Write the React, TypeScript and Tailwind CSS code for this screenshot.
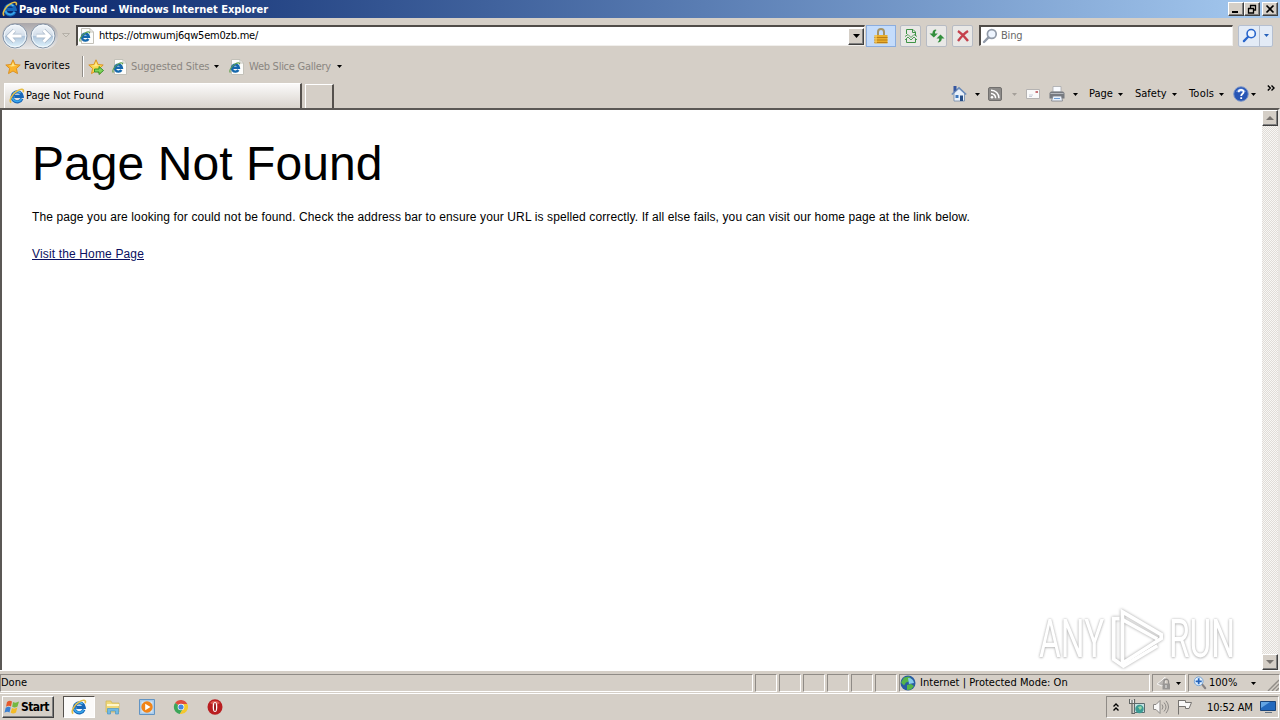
import React from 'react';

const EIcon: React.FC<{ className?: string }> = ({ className }) => (
  <svg viewBox="0 0 16 16" className={className}>
    <path d="M12.9 10.6A5 5 0 1 1 13.2 8.3H5.2" fill="none" stroke="#1767b8" strokeWidth="3.2" />
    <path d="M12.6 10.8A5 5 0 0 1 3.4 9.8" fill="none" stroke="#38a6ea" strokeWidth="1.6" />
    <path d="M4.4 5.6A4.8 4.8 0 0 1 11.5 5" fill="none" stroke="#5cc0f2" strokeWidth="1.3" />
    <path d="M2.2 14.6C-.6 12.6 3.6 5.4 8.6 2.6 12 .6 15.4.4 14.2 4.2" fill="none" stroke="#e5bd45" strokeWidth="1.6" />
  </svg>
);

const PageIcon = () => (
  <svg viewBox="0 0 16 16" className="h-4 w-4 shrink-0">
    <path d="M2.5.5h8.500l3.500 3.500v11.500h-12z" fill="#fdfdfb" stroke="#c3c1b9" />
    <path d="M11 .5V4h3.500" fill="none" stroke="#c3c1b9" />
    <path d="M9.400 11A3.500 3.500 0 1 1 9.900 8.800H3.400" fill="none" stroke="#1668ad" strokeWidth="2.400" />
    <path d="M1.400 13.500C-.4 11.900 2.600 7.100 6 5.100 8.600 3.500 11 3.300 10.500 5.300" fill="none" stroke="#5fa04c" strokeWidth="1.100" />
  </svg>
);

const Star: React.FC<{ add?: boolean }> = ({ add }) => (
  <svg viewBox="0 0 16 16" className="h-4 w-4 shrink-0">
    <path d="M8 .8l2.100 4.700 5.100.5-3.800 3.500 1.100 5.100L8 12l-4.500 2.600 1.100-5.100L.8 6l5.100-.5z" fill={add ? '#f8d94e' : '#fbb42c'} stroke="#d98c1c" strokeWidth=".9" />
    <path d="M8 3l1.200 3.300 3 .4-5.600.8-2.900-.8 3-.4z" fill="#ffe78a" />
    {add && <path d="M6.500 10H11V7.500l4.500 4-4.500 4V13H6.500z" fill="#7fd45a" stroke="#2d8a24" strokeWidth=".9" />}
  </svg>
);

const Caret: React.FC<{ className?: string }> = ({ className = 'text-black' }) => (
  <svg viewBox="0 0 5 3" className={`h-[3px] w-[5px] shrink-0 ${className}`}>
    <path d="M0 0h5L2.500 3z" fill="currentColor" />
  </svg>
);

const NavArrow: React.FC<{ flip?: boolean }> = ({ flip }) => (
  <svg viewBox="0 0 26 26" className={`h-[26px] w-[26px] shrink-0 ${flip ? '-scale-x-100' : ''}`}>
    <defs>
      <linearGradient id="orb" x1="0" y1="0" x2="0" y2="1">
        <stop offset="0" stopColor="#f2f6fa" />
        <stop offset=".48" stopColor="#d3deea" />
        <stop offset=".52" stopColor="#b0c6dc" />
        <stop offset="1" stopColor="#e2f6ff" />
      </linearGradient>
    </defs>
    <circle cx="13" cy="13" r="12" fill="url(#orb)" stroke="#8796a8" />
    <circle cx="13" cy="13" r="10.800" fill="none" stroke="#f4f9fd" />
    <path d="M12.500 7.300L6.800 13l5.700 5.700M7.500 13h12" fill="none" stroke="#a9b8c9" strokeWidth="4.400" />
    <path d="M12.500 7.300L6.800 13l5.700 5.700M7.500 13h12" fill="none" stroke="#fff" strokeWidth="3" />
  </svg>
);

const Magnifier: React.FC<{ color: string; className?: string }> = ({ color, className }) => (
  <svg viewBox="0 0 16 16" className={className}>
    <circle cx="9.800" cy="6" r="4.400" fill="#eef5ff" stroke={color} strokeWidth="1.700" />
    <path d="M6.500 9.400L2 14" stroke={color} strokeWidth="2.400" strokeLinecap="round" />
  </svg>
);

const ToolButton: React.FC<{ children: React.ReactNode }> = ({ children }) => (
  <div className="flex h-[22px] w-[21px] shrink-0 items-center justify-center rounded-[2px] border border-[#b7bbc3] bg-[#e9e8e6]">
    {children}
  </div>
);

const raised = 'border border-t-white border-l-white border-r-[#404040] border-b-[#404040] bg-[#d5cfc7] shadow-[inset_-1px_-1px_#808080]';

const WindowButton: React.FC<{ children: React.ReactNode }> = ({ children }) => (
  <div className={`flex h-[14px] w-4 shrink-0 items-center justify-center ${raised}`}>
    <svg viewBox="0 0 12 10" className="h-[10px] w-3 shrink-0" fill="none" stroke="#000">
      {children}
    </svg>
  </div>
);

const ScrollButton: React.FC<{ up?: boolean }> = ({ up }) => (
  <div className={`flex h-4 w-4 shrink-0 items-center justify-center ${raised}`}>
    <svg viewBox="0 0 8 4" className={`h-1 w-2 ${up ? '' : 'rotate-180'}`}>
      <path d="M0 4L4 0l4 4z" fill="#77736f" />
    </svg>
  </div>
);

const TitleBar = () => (
  <div className="flex h-[18px] items-center bg-linear-to-r from-[#0a246a] to-[#a6caf0] pl-[2px] pr-[2px]">
    <EIcon className="h-4 w-4 shrink-0" />
    <span className="ml-px pt-px text-[11px] font-bold text-white">Page Not Found - Windows Internet Explorer</span>
    <div className="ml-auto flex">
      <WindowButton><path d="M2 8h6" strokeWidth="2" /></WindowButton>
      <WindowButton><path d="M4 1.500h6M4.500 1v3M9.500 1v5H8M2 4.500h6M2.500 4v5h5V4" strokeWidth="1.300" /></WindowButton>
      <div className="ml-[2px]">
        <WindowButton><path d="M2.500 1.500l7 7M9.500 1.500l-7 7" strokeWidth="1.700" /></WindowButton>
      </div>
    </div>
  </div>
);

const NavBar = () => (
  <div className="flex h-[35px] items-center pl-[2px]">
    <div className="flex w-14 shrink-0 gap-[2px] rounded-full bg-linear-to-b from-[#aaa7aa] to-[#e9e8e8]">
      <NavArrow />
      <NavArrow flip />
    </div>
    <svg viewBox="0 0 8 5" className="ml-[4px] h-[5px] w-2 shrink-0"><path d="M.5.5h7L4 4z" fill="#d8d4cc" stroke="#b5b0a8" /></svg>
    <div className="ml-[6px] flex h-[21px] w-[789px] shrink-0 items-center border-2 border-b border-r border-t-[#504c48] border-l-[#504c48] border-b-[#f1efec] border-r-[#f1efec] bg-white pl-px">
      <PageIcon />
      <span className="ml-[4px] text-[11px] tracking-[-0.19px] text-black">https://otmwumj6qw5em0zb.me/</span>
      <div className={`ml-auto flex h-[17px] w-4 items-center justify-center ${raised}`}>
        <svg viewBox="0 0 7 4" className="h-1 w-[7px]"><path d="M0 0h7L3.500 4z" /></svg>
      </div>
    </div>
    <div className="ml-px flex h-[22px] w-[30px] shrink-0 items-center justify-center border border-[#8badde] bg-[#c4dcfb]">
      <svg viewBox="0 0 16 16" className="h-4 w-4">
        <path d="M5 7.500V4a3 3 0 0 1 6 0v3.500" fill="none" stroke="#a59468" strokeWidth="2" />
        <path d="M1.500 7h13v8.500h-13z" fill="#e9ae2c" />
        <path d="M1.500 9.500h13M1.500 12h13M1.500 14.500h13" stroke="#bb7e17" />
        <path d="M3 7v8" stroke="#ffdc78" />
      </svg>
    </div>
    <div className="ml-[4px] flex shrink-0 gap-[5px]">
      <ToolButton>
        <svg viewBox="0 0 16 16" className="h-4 w-4 shrink-0" fill="none" stroke="#3f9447">
          <path d="M3.500 6V1.500h6.500L12.500 4v4M3.500 11v3.500h9V11M9.500 2v2.500h3" />
          <path d="M2 8.500l3-2 3 3 3-3 3 2M2 12l3-3 3 3 3-3 3 3" strokeWidth=".9" />
        </svg>
      </ToolButton>
      <ToolButton>
        <svg viewBox="0 0 16 16" className="h-4 w-4 shrink-0" fill="#338f3d">
          <path d="M6.500 1.500C4 2 3.500 3.500 3.500 5.500H.5L4.800 9.500l4-4H6C6 4 6 3.300 7.500 2z" />
          <path d="M9 14.500c3-.5 3.700-2 3.700-4h2.800l-4-4-4 4h2.700c0 1.500 0 2.500-1.500 3.600z" />
        </svg>
      </ToolButton>
      <ToolButton>
        <svg viewBox="0 0 16 16" className="h-4 w-4 shrink-0">
          <path d="M3 3C6 5 10 9 13 13M13 3C9 5.500 6 9 3 13" fill="none" stroke="#c5414d" strokeWidth="2.400" />
        </svg>
      </ToolButton>
    </div>
    <div className="ml-[6px] flex h-[21px] w-[254px] shrink-0 items-center border border-l-2 border-t-2 border-[#f1efec] border-l-[#504c48] border-t-[#504c48] bg-white pl-px">
      <Magnifier color="#929ba9" className="h-4 w-4" />
      <span className="ml-[3px] text-[11px] tracking-[-0.2px] text-[#686868]">Bing</span>
    </div>
    <div className="ml-[5px] flex h-[22px] w-[35px] shrink-0 rounded-[2px] border border-[#b5bfd0] bg-[#e3ebf6]">
      <div className="flex w-[21px] items-center justify-center border-r border-[#b5bfd0]">
        <Magnifier color="#2865cb" className="h-[15px] w-[15px]" />
      </div>
      <div className="flex flex-1 items-center justify-center"><Caret className="text-[#2560ba]" /></div>
    </div>
  </div>
);

const FavoritesBar = () => (
  <div className="flex h-[27px] items-center pl-[5px] text-[11px]">
    <Star />
    <span className="ml-[3px] w-[47px] shrink-0 pb-px tracking-[0.15px] text-black">Favorites</span>
    <div className="ml-[11px] h-[21px] w-[2px] shrink-0 border-l border-r border-l-[#918d87] border-r-white" />
    <div className="ml-1"><Star add /></div>
    <div className="ml-2"><PageIcon /></div>
    <span className="ml-[3px] w-[79px] shrink-0 whitespace-nowrap pt-px tracking-[-0.1px] text-[#8a8681]">Suggested Sites</span>
    <div className="ml-1"><Caret /></div>
    <div className="ml-[10px]"><PageIcon /></div>
    <span className="ml-[4px] w-[84px] shrink-0 whitespace-nowrap pt-px tracking-[-0.26px] text-[#8a8681]">Web Slice Gallery</span>
    <div className="ml-1"><Caret /></div>
  </div>
);

const HomeIcon = () => (
  <svg viewBox="0 0 16 16" className="h-4 w-4 shrink-0">
    <path d="M3 7v8h10.500V7L8 2z" fill="#e9f1fa" stroke="#6f89aa" strokeWidth=".8" />
    <path d="M.8 8.500L8 1.800l7.200 6.700" fill="none" stroke="#6c8cba" strokeWidth="1.700" />
    <path d="M2.500 0h3v4l-3 2z" fill="#3556a0" />
    <path d="M9 9.500h3V15H9z" fill="#264e87" />
    <path d="M4.500 9h3v3h-3z" fill="#3f78bd" />
  </svg>
);

const FeedIcon = () => (
  <svg viewBox="0 0 14 14" className="h-[14px] w-[14px] shrink-0">
    <rect x=".5" y=".5" width="13" height="13" rx="1.500" fill="#8d8b89" stroke="#72706e" />
    <circle cx="4" cy="10.300" r="1.300" fill="#fff" />
    <path d="M3 6.500a4.500 4.500 0 0 1 4.600 4.700M3 3.300a7.800 7.800 0 0 1 8 8" fill="none" stroke="#fff" strokeWidth="1.500" />
  </svg>
);

const PrinterIcon = () => (
  <svg viewBox="0 0 16 16" className="h-4 w-4 shrink-0">
    <path d="M4 .5h8V6H4z" fill="#f9fbff" stroke="#a7a8ac" strokeWidth=".8" />
    <path d="M2 5.500h12l1.500 1.500v5.500H.5V7z" fill="#777a80" />
    <path d="M1.500 7.500h13" stroke="#b6b9be" />
    <path d="M4 10h8.500l1 5h-11z" fill="#e8f0fb" stroke="#7c7f86" strokeWidth=".8" />
    <path d="M5 12.500h6" stroke="#6e9dd4" />
  </svg>
);

const CommandBar = () => (
  <div className="flex h-[22px] w-[329px] shrink-0 items-center whitespace-nowrap text-[11px] text-black">
    <HomeIcon />
    <div className="ml-2"><Caret /></div>
    <div className="ml-[8px]"><FeedIcon /></div>
    <div className="ml-[10px]"><Caret className="text-[#a5a09a]" /></div>
    <svg viewBox="0 0 14 10" className="ml-[9px] h-[10px] w-[14px] shrink-0">
      <path d="M.5.5h13v9H.5z" fill="#fafafa" stroke="#b5b3b2" />
      <path d="M3 6h4M3 7.500h3" stroke="#c8ccd8" />
      <path d="M9.500 2H12v2H9.500z" fill="#c77277" />
    </svg>
    <div className="ml-[9px]"><PrinterIcon /></div>
    <div className="ml-2"><Caret /></div>
    <span className="ml-[11px] w-[25px]">Page</span>
    <div className="ml-1"><Caret /></div>
    <span className="ml-[12px] w-[33px]">Safety</span>
    <div className="ml-1"><Caret /></div>
    <span className="ml-[12px] w-[27px] tracking-[0.2px]">Tools</span>
    <div className="ml-[3px]"><Caret /></div>
    <svg viewBox="0 0 16 16" className="ml-[9px] h-4 w-4 shrink-0">
      <circle cx="8" cy="8" r="7.300" fill="#2856b5" stroke="#8199c9" />
      <path d="M3 6a5.300 5.300 0 0 1 10 0z" fill="#6690dc" />
      <path d="M5.700 6.200c0-3.200 4.900-3 4.900-.3C10.600 7.800 8.200 7.800 8.200 10M8.200 11.300v1.700" fill="none" stroke="#fff" strokeWidth="1.800" />
    </svg>
    <div className="ml-[2px]"><Caret /></div>
    <svg viewBox="0 0 8 6" className="mb-3 ml-[11px] h-[6px] w-2 shrink-0" fill="none" stroke="#000" strokeWidth="1.400">
      <path d="M.8.5L3.300 3 .8 5.500M4.500.5L7 3 4.500 5.500" />
    </svg>
  </div>
);

const TabRow = () => (
  <div className="flex h-7 items-start">
    <div className="ml-1 mt-[3px] flex h-[25px] w-[298px] shrink-0 items-center border-l border-r-2 border-t border-l-white border-r-[#55514d] border-t-white bg-linear-to-b from-[#fbfafa] to-[#d9d4cd] pl-1">
      <EIcon className="h-4 w-4 shrink-0" />
      <span className="ml-px text-[11px] text-black">Page Not Found</span>
    </div>
    <div className="ml-[3px] mt-[4px] h-6 w-[29px] border-l border-r-2 border-t border-l-white border-r-[#55514d] border-t-white" />
    <div className="ml-auto mt-[3px]"><CommandBar /></div>
  </div>
);

const Watermark = () => (
  <div className="absolute right-[27px] bottom-0 flex h-[62px] w-[196px] items-center justify-between font-['Roboto',sans-serif] text-[53px] leading-none text-white [text-shadow:0_0_3px_#b4b4b4,0_1px_3px_#c8c8c8]">
    <span className="w-[66px] shrink-0 origin-left scale-x-[0.63] whitespace-nowrap">ANY</span>
    <svg viewBox="0 0 58 64" className="h-[62px] w-[58px] shrink-0 drop-shadow-[0_0_1.5px_#a0a0a0]" fill="none" stroke="#fff" strokeWidth="3.800">
      <path d="M14 4l40 23.500v4L14 57z" />
      <path d="M14 12l36 20M11 11H5v42l10 7 35-21" />
    </svg>
    <span className="w-[66px] shrink-0 origin-left scale-x-[0.63] whitespace-nowrap">RUN</span>
  </div>
);

const PageContent = () => (
  <div className="flex h-[562px] border-l-2 border-r-2 border-t-2 border-l-[#5b5855] border-r-[#e8e5e1] border-t-[#5b5855] bg-white">
    <div className="relative flex-1 pl-[30px] font-['Liberation_Sans',Arial,sans-serif] text-black">
      <h1 className="mt-[26px] whitespace-nowrap text-[48px] leading-[55px] tracking-[0.06px]">Page Not Found</h1>
      <p className="mt-[18px] whitespace-nowrap text-[12px] leading-4 tracking-[0.113px]">
        The page you are looking for could not be found. Check the address bar to ensure your URL is spelled correctly. If all else fails, you can visit our home page at the link below.
      </p>
      <a className="mt-[21px] block w-fit whitespace-nowrap text-[12px] leading-4 tracking-[0.15px] text-[#0b1060] underline">Visit the Home Page</a>
      <Watermark />
    </div>
    <div className="flex w-4 shrink-0 flex-col justify-between bg-[#ece9e6] bg-[repeating-conic-gradient(#e0dcd7_0_25%,#f8f7f5_0_50%)] bg-[length:2px_2px]">
      <ScrollButton up />
      <ScrollButton />
    </div>
  </div>
);

const pane = 'h-[18px] shrink-0 border border-t-[#8f8b86] border-l-[#8f8b86] border-r-white border-b-white';

const StatusBar = () => (
  <div className="flex h-[23px] items-end gap-[2px] border-t border-white pb-px text-[11px] text-black">
    <div className={`${pane} flex w-[753px] items-center`}><span>Done</span></div>
    {[0, 1, 2, 3, 4, 5].map((i) => (
      <div key={i} className={`${pane} w-[22px]`} />
    ))}
    <div className={`${pane} flex w-[251px] items-center`}>
      <svg viewBox="0 0 16 16" className="h-4 w-4 shrink-0">
        <circle cx="8" cy="8" r="7.500" fill="#285ba2" />
        <path d="M4 2.500l5-1 2 2-2 3-3 1-2 3-3-3zM7 10l4-1 3 2-3 3.500-4 .5z" fill="#55b548" />
        <path d="M8 3a6 6 0 0 1 6 5L9 9z" fill="#86cbed" />
      </svg>
      <span className="ml-[4px] whitespace-nowrap tracking-[0.03px]">Internet | Protected Mode: On</span>
    </div>
    <div className={`${pane} flex w-[34px] items-center pl-[3px]`}>
      <svg viewBox="0 0 16 16" className="h-4 w-4 shrink-0">
        <path d="M1 9l5-4 3-3v6l-3 3z" fill="#bab7b4" stroke="#f5f3f1" />
        <path d="M8 9V6.500a2.200 2.200 0 0 1 4.500 0V9" fill="none" stroke="#8f8c8a" strokeWidth="1.300" />
        <path d="M6.500 8.500h7.500v6H6.500z" fill="#989694" />
        <path d="M10 10v3" stroke="#eee" />
      </svg>
      <div className="ml-1"><Caret /></div>
    </div>
    <div className={`${pane} flex w-[92px] items-center pl-1`}>
      <svg viewBox="0 0 16 16" className="h-[14px] w-[14px] shrink-0">
        <path d="M10 9l4 5" stroke="#868283" strokeWidth="2.300" strokeLinecap="round" />
        <circle cx="6.500" cy="6" r="5" fill="#e5f3ff" stroke="#6a9bd2" />
        <path d="M6.500 2.500v7M3 6h7" stroke="#2463ba" strokeWidth="2" />
      </svg>
      <span className="ml-[2px] w-[30px]">100%</span>
      <div className="ml-[12px]"><Caret /></div>
      <svg viewBox="0 0 12 12" className="ml-auto h-3 w-3 shrink-0 self-end">
        <path d="M1 12L12 1M5 12l7-7M9 12l3-3" stroke="#928e89" strokeWidth="1.400" />
      </svg>
    </div>
  </div>
);

const Taskbar = () => (
  <div className="flex h-[27px] items-center border-t border-white pl-[2px] text-[11px] text-black">
    <div className={`flex h-[22px] w-[52px] shrink-0 items-center pl-[1px] ${raised}`}>
      <svg viewBox="0 0 16 16" className="h-4 w-4 shrink-0">
        <path d="M3 3c2-1.500 3.500-1.500 5-.5L7 7.500c-1.500-1-3-1-5 .2z" fill="#e5592b" />
        <path d="M9 3c2 1 3.500.8 6-.5l-1.500 5c-2 1.200-3.500 1.300-5.300.3z" fill="#75b840" />
        <path d="M1.700 8.700c2-1.200 3.500-1.200 5-.2l-1.200 5c-1.500-1-3-1-5 .2z" fill="#3b80d2" />
        <path d="M8 9c1.800 1 3.200.8 5.300-.4l-1.300 5c-2 1.200-3.500 1.200-5.300.2z" fill="#f3bb26" />
      </svg>
      <span className="ml-px text-[12px] font-bold tracking-[-0.6px]">Start</span>
    </div>
    <div className="ml-[9px] flex h-[22px] w-8 shrink-0 items-center justify-center border border-b-white border-l-[#55514d] border-r-white border-t-[#55514d] bg-[#fbfaf9]">
      <EIcon className="h-4 w-4" />
    </div>
    <svg viewBox="0 0 16 16" className="ml-[10px] h-4 w-4 shrink-0">
      <path d="M1 2h5l1 2h7v9H1z" fill="#efd878" stroke="#d2b75c" strokeWidth=".8" />
      <path d="M2 6h12" stroke="#fff6c9" strokeWidth="2" />
      <path d="M2.500 15V9.500h11V15h-3v-3h-5v3z" fill="#71b9e4" stroke="#4c96c4" strokeWidth=".7" />
    </svg>
    <svg viewBox="0 0 16 16" className="ml-[18px] h-4 w-4 shrink-0">
      <path d="M.5.5h15v15H.5z" fill="#aacbea" stroke="#6294c3" />
      <path d="M2.500 2.500h11v11h-11z" fill="#d4e7f7" />
      <circle cx="8" cy="8" r="5.700" fill="#f18418" />
      <path d="M6.200 4.700L11.500 8l-5.300 3.300z" fill="#fff" />
    </svg>
    <svg viewBox="0 0 16 16" className="ml-[18px] h-4 w-4 shrink-0">
      <path d="M8 8L2.100 4A7 7 0 0 1 14.300 5z" fill="#df4c3d" />
      <path d="M8 8L2.100 4a7 7 0 0 0 4.700 10.900L10 10z" fill="#3ca659" />
      <path d="M14.300 5H8l2 5-3.200 4.900A7 7 0 0 0 14.300 5z" fill="#f4c82d" />
      <circle cx="8" cy="8" r="3.300" fill="#fff" />
      <circle cx="8" cy="8" r="2.600" fill="#4586e0" />
    </svg>
    <svg viewBox="0 0 16 16" className="ml-[18px] h-4 w-4 shrink-0">
      <ellipse cx="8" cy="8" rx="7.500" ry="7.700" fill="#b91e20" />
      <path d="M3 4a6.500 6.500 0 0 1 10 0L8 7z" fill="#dc5a51" />
      <ellipse cx="8" cy="8" rx="2.300" ry="5" fill="#fff" />
      <ellipse cx="8" cy="8" rx="1" ry="4.300" fill="#981b1b" />
    </svg>
    <div className="ml-auto mr-px flex h-[22px] w-[173px] shrink-0 items-center border border-b-white border-l-[#8f8b86] border-r-white border-t-[#8f8b86] pl-[6px]">
      <svg viewBox="0 0 6 8" className="mb-px h-2 w-[6px] shrink-0" fill="none" stroke="#000" strokeWidth="1.400">
        <path d="M.5 3.500L3 1l2.500 2.500M.5 7.500L3 5l2.500 2.500" />
      </svg>
      <svg viewBox="0 0 16 16" className="ml-[10px] h-4 w-4 shrink-0">
        <path d="M5.500 4.500h10v9h-10z" fill="#c3e2e2" stroke="#5a6b6e" />
        <circle cx="10.500" cy="10" r="4.200" fill="#3b9b93" />
        <path d="M9 8l3-1 1 2-2 2z" fill="#9ad6a7" />
        <path d="M1 1v3.500h4V1z" fill="#fafafa" />
        <path d="M.5 0v4.500h5V0M3 1v13.500h3" fill="none" stroke="#626664" strokeWidth="1.200" />
      </svg>
      <svg viewBox="0 0 16 16" className="ml-2 h-4 w-4 shrink-0" fill="none" stroke="#8c8986">
        <path d="M.5 5.500h2.500l4-4v13l-4-4H.5z" fill="#f9f8f7" />
        <path d="M9 5.500q2 2.500 0 5M11 3.500q4 4.500 0 9M13 1.800q5 6.200 0 12.400" />
      </svg>
      <svg viewBox="0 0 16 16" className="ml-[8px] h-4 w-4 shrink-0" fill="#f9f8f7" stroke="#777471">
        <path d="M1.500 1v14.500M1.500 1.500h7v2h6l-2.500 6H8.500v-2h-7" />
      </svg>
      <span className="ml-[14px] w-[47px] whitespace-nowrap pt-px tracking-[-0.15px]">10:52 AM</span>
      <svg viewBox="0 0 16 12" className="ml-[6px] h-3 w-4 shrink-0">
        <path d="M.5.5h15v9H.5z" fill="#2269bd" stroke="#1a457a" />
        <path d="M1 1h9L1 7z" fill="#63a5e3" />
        <path d="M5 11.500h7" stroke="#657382" />
      </svg>
    </div>
  </div>
);

export default function App() {
  return (
    <div className="flex h-[720px] w-[1280px] flex-col overflow-hidden bg-[#d5cfc7] font-['DejaVu_Sans_Condensed','DejaVu_Sans',sans-serif] leading-[14px]">
      <TitleBar />
      <NavBar />
      <FavoritesBar />
      <TabRow />
      <PageContent />
      <StatusBar />
      <Taskbar />
    </div>
  );
}
